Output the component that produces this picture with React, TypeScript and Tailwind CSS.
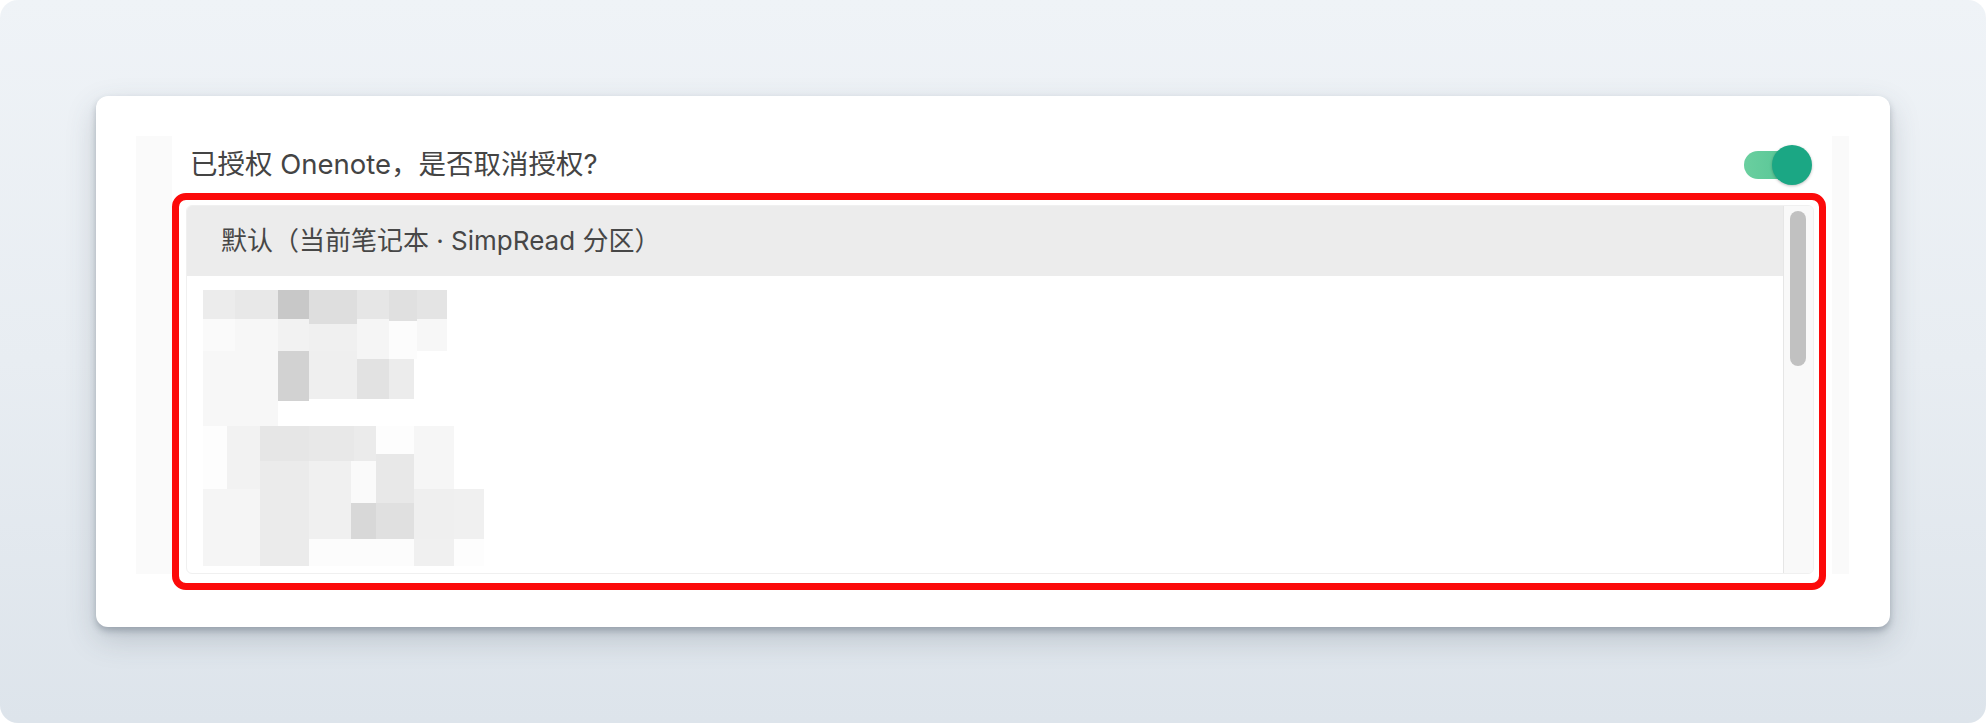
import React from 'react';

const font = 'font-["Inter","Noto_Sans_CJK_SC",sans-serif]';

// pixelated (mosaic) cover of the notebook list, coordinates in source pixels x3
const mosaic: [number, number, number, number, string][] = [
	// first group
	[38, 28, 95, 87, '#ececec'],
	[133, 28, 129, 87, '#e8e8e8'],
	[262, 28, 93, 87, '#c8c8c8'],
	[355, 28, 145, 102, '#dedede'],
	[500, 28, 95, 87, '#e6e6e6'],
	[595, 28, 85, 92, '#e0e0e0'],
	[680, 28, 90, 87, '#e4e4e4'],
	[38, 115, 95, 95, '#fafafa'],
	[133, 115, 129, 95, '#f7f7f7'],
	[262, 115, 93, 95, '#f2f2f2'],
	[355, 130, 145, 80, '#f0f0f0'],
	[500, 115, 95, 120, '#f5f5f5'],
	[595, 120, 85, 115, '#fcfcfc'],
	[680, 115, 90, 95, '#f7f7f7'],
	[38, 210, 224, 225, '#f7f7f7'],
	[262, 210, 93, 150, '#d2d2d2'],
	[355, 210, 145, 145, '#efefef'],
	[500, 235, 95, 120, '#e2e2e2'],
	[595, 235, 75, 120, '#ececec'],
	// second group
	[38, 437, 72, 188, '#fdfdfd'],
	[110, 437, 100, 188, '#f2f2f2'],
	[210, 437, 145, 103, '#e6e6e6'],
	[355, 437, 135, 103, '#e8e8e8'],
	[490, 437, 65, 103, '#ebebeb'],
	[555, 437, 115, 83, '#fdfdfd'],
	[670, 437, 120, 188, '#f6f6f6'],
	[210, 540, 145, 315, '#ebebeb'],
	[355, 540, 125, 235, '#f0f0f0'],
	[480, 540, 75, 125, '#fafafa'],
	[555, 520, 115, 145, '#e8e8e8'],
	[38, 625, 172, 230, '#f5f5f5'],
	[480, 665, 75, 110, '#d8d8d8'],
	[555, 665, 115, 110, '#e0e0e0'],
	[670, 625, 120, 150, '#efefef'],
	[790, 625, 90, 150, '#f0f0f0'],
	[355, 775, 315, 80, '#fcfcfc'],
	[670, 775, 120, 80, '#f0f0f0'],
	[790, 775, 90, 80, '#fdfdfd'],
];

const Toggle = () => (
	<div className="relative w-[68px] h-[40px] shrink-0">
		<div className="absolute left-0 top-[6px] w-[63px] h-[28px] rounded-full bg-gradient-to-r from-[#6acf9f] to-[#4fc293]" />
		<div className="absolute right-0 top-0 w-[40px] h-[40px] rounded-full bg-[#1ba784] shadow-[0_1px_3px_rgba(0,0,0,0.25)]" />
	</div>
);

export default function App() {
	return (
		<div className={`w-[1986px] h-[723px] bg-white ${font}`}>
			<div className="w-full h-full flex p-[96px] rounded-[18px] bg-gradient-to-b from-[#eff3f7] via-[#e8edf2] to-[#dde4eb]">
				<div className="flex-1 flex rounded-[12px] bg-white pt-[40px] pl-[40px] pr-[41px] pb-[53px] shadow-[0_4px_6px_rgba(60,72,88,0.3),0_12px_30px_rgba(60,72,88,0.22)]">
					<div className="flex-1 flex bg-[#fafafa] pl-[36px] pr-[17px]">
						<div className="flex-1 flex flex-col bg-white pl-[14px] pr-[18px]">
							<div className="h-[58px] flex items-center justify-between pl-[4px] pr-[2px]">
								<span className="text-[27.5px] text-[#444444] leading-none">已授权 Onenote，是否取消授权?</span>
								<Toggle />
							</div>

							<div className="relative mt-[11px] flex-1 flex">
								<div className="flex-1 flex rounded-[6px] overflow-hidden border border-[#f0f0f0]">
									<div className="flex-1 flex flex-col">
										<div className="h-[70px] shrink-0 flex items-center pl-[34px] bg-[#ececec]">
											<span className="text-[26px] text-[#474747] leading-none">默认（当前笔记本 · SimpRead 分区）</span>
										</div>
										<div className="pl-[16px] pt-[14px]">
											<svg width="281" height="276" viewBox="38 28 842 827" shapeRendering="crispEdges">
												{mosaic.map(([x, y, w, h, c], i) => (
													<rect key={i} x={x} y={y} width={w} height={h} fill={c} />
												))}
											</svg>
										</div>
									</div>
									<div className="w-[30px] shrink-0 bg-[#f9f9f9] border-l border-[#e6e6e6] pl-[6px] pt-[5px]">
										<div className="w-[16px] h-[155px] rounded-full bg-[#c1c1c1]" />
									</div>
								</div>
								{/* annotation outline */}
								<div className="absolute -left-[14px] -right-[12px] -top-[12px] -bottom-[16px] border-[7px] border-[#fc0a0a] rounded-[14px] pointer-events-none" />
							</div>
						</div>
					</div>
				</div>
			</div>
		</div>
	);
}
